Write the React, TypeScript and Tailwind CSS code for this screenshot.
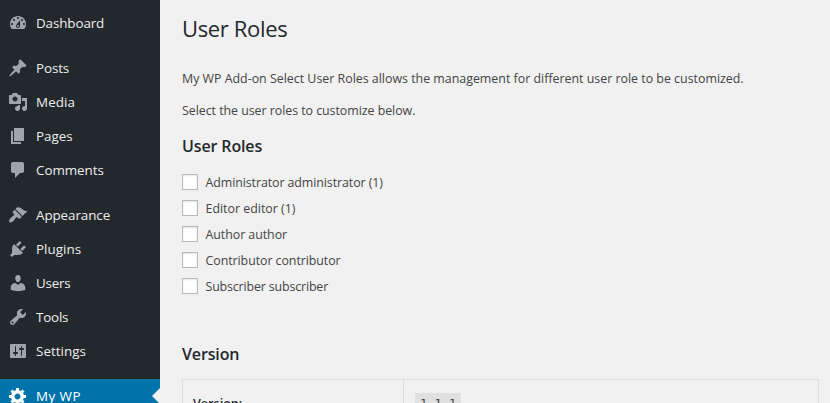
type MenuItem = { label: string; path: string; tracking: string; gap?: boolean; current?: boolean };

const menu: MenuItem[] = [
  {
    label: 'Dashboard',
    tracking: 'tracking-[-0.1px]',
    path: 'M3.76 16h12.48c1.1-1.37 1.76-3.11 1.76-5 0-4.42-3.58-8-8-8s-8 3.58-8 8c0 1.89.66 3.63 1.76 5zM10 4c.55 0 1 .45 1 1s-.45 1-1 1-1-.45-1-1 .45-1 1-1zM6 6c.55 0 1 .45 1 1s-.45 1-1 1-1-.45-1-1 .45-1 1-1zm8 0c.55 0 1 .45 1 1s-.45 1-1 1-1-.45-1-1 .45-1 1-1zm-5.37 5.55L12 7v6c0 1.1-.9 2-2 2s-2-.9-2-2c0-.57.24-1.08.63-1.45zM4 10c.55 0 1 .45 1 1s-.45 1-1 1-1-.45-1-1 .45-1 1-1zm12 0c.55 0 1 .45 1 1s-.45 1-1 1-1-.45-1-1 .45-1 1-1zm-5 3c0-.55-.45-1-1-1s-1 .45-1 1 .45 1 1 1 1-.45 1-1z',
  },
  {
    label: 'Posts',
    tracking: 'tracking-[-0.1px]',
    gap: true,
    path: 'M10.44 3.02l1.82-1.82 6.36 6.35-1.83 1.82c-1.05-.68-2.48-.57-3.41.36l-.75.75c-.92.93-1.04 2.35-.35 3.41l-1.83 1.82-2.41-2.41-2.8 2.79c-.42.42-3.38 2.71-3.8 2.29s1.86-3.39 2.28-3.81l2.79-2.79L4.1 9.36l1.83-1.82c1.05.69 2.48.57 3.4-.36l.75-.75c.93-.92 1.05-2.35.36-3.41z',
  },
  {
    label: 'Media',
    tracking: 'tracking-[0.1px]',
    path: 'M13 11V4c0-.55-.45-1-1-1h-1.67L9 1H5L3.67 3H2c-.55 0-1 .45-1 1v7c0 .55.45 1 1 1h10c.55 0 1-.45 1-1zM7 4.5c1.38 0 2.5 1.12 2.5 2.5S8.38 9.5 7 9.5 4.5 8.38 4.5 7 5.62 4.5 7 4.5zM14 6h5v10.5c0 1.38-1.12 2.5-2.5 2.5S14 17.88 14 16.5s1.12-2.5 2.5-2.5c.17 0 .34.02.5.05V9h-3V6zm-4 8.05V13h2v3.5c0 1.38-1.12 2.5-2.5 2.5S7 17.88 7 16.5 8.12 14 9.5 14c.17 0 .34.02.5.05z',
  },
  { label: 'Pages', tracking: 'tracking-normal', path: 'M6 15V2h10v13H6zm-1 1h8v2H3V5h2v11z' },
  {
    label: 'Comments',
    tracking: 'tracking-[-0.05px]',
    path: 'M5 2h9c1.1 0 2 .9 2 2v7c0 1.1-.9 2-2 2h-2l-5 5v-5H5c-1.1 0-2-.9-2-2V4c0-1.1.9-2 2-2z',
  },
  {
    label: 'Appearance',
    tracking: 'tracking-[-0.08px]',
    gap: true,
    path: 'M14.48 11.06L7.41 3.99l1.5-1.5c.5-.56 2.3-.47 3.51.32 1.21.8 1.43 1.28 2.91 2.1 1.18.64 2.45 1.26 4.45.85zm-.71.71L6.7 4.7 4.93 6.47c-.39.39-.39 1.02 0 1.41l1.06 1.06c.39.39.39 1.03 0 1.42-.6.6-1.43 1.11-2.21 1.69-.35.26-.7.53-1.01.84C1.43 14.23.4 16.08 1.4 17.07c.99 1 2.84-.03 4.18-1.36.31-.31.58-.66.85-1.02.57-.78 1.08-1.61 1.69-2.21.39-.39 1.02-.39 1.41 0l1.06 1.06c.39.39 1.02.39 1.41 0z',
  },
  {
    label: 'Plugins',
    tracking: 'tracking-[0.05px]',
    path: 'M13.11 4.36L9.87 7.6 8 5.73l3.24-3.24c.35-.34 1.05-.2 1.56.32.52.51.66 1.21.31 1.55zm-8 1.77l.91-1.12 9.01 9.01-1.19.84c-.71.71-2.63 1.16-3.82 1.16H6.14L4.9 17.26c-.59.59-1.54.59-2.12 0-.59-.58-.59-1.53 0-2.12l1.24-1.24v-3.88c0-1.13.4-3.19 1.09-3.89zm7.26 3.97l3.24-3.24c.34-.35 1.04-.21 1.55.31.52.51.66 1.21.31 1.55l-3.24 3.25z',
  },
  {
    label: 'Users',
    tracking: 'tracking-[-0.2px]',
    path: 'M10 9.25c-2.27 0-2.73-3.44-2.73-3.44C7 4.02 7.82 2 9.97 2c2.16 0 2.98 2.02 2.71 3.81 0 0-.41 3.44-2.68 3.44zm0 2.57L12.72 10c2.39 0 4.52 2.33 4.52 4.53v2.49s-3.65 1.13-7.24 1.13c-3.65 0-7.24-1.13-7.24-1.13v-2.49c0-2.25 1.94-4.48 4.47-4.48z',
  },
  {
    label: 'Tools',
    tracking: 'tracking-[-0.2px]',
    path: 'M16.68 9.77c-1.34 1.34-3.3 1.67-4.95.99l-5.41 6.52c-.99.99-2.59.99-3.58 0s-.99-2.59 0-3.57l6.52-5.42c-.68-1.65-.35-3.61.99-4.95 1.28-1.28 3.12-1.62 4.72-1.06l-2.89 2.89 2.82 2.82 2.86-2.87c.53 1.58.18 3.39-1.08 4.65zM3.81 16.21c.4.39 1.04.39 1.43 0 .4-.4.4-1.04 0-1.43-.39-.4-1.03-.4-1.43 0-.39.39-.39 1.03 0 1.43z',
  },
  {
    label: 'Settings',
    tracking: 'tracking-[0.05px]',
    path: 'M18 16V4c0-.55-.45-1-1-1H3c-.55 0-1 .45-1 1v12c0 .55.45 1 1 1h14c.55 0 1-.45 1-1zM8 11h1c.55 0 1 .45 1 1s-.45 1-1 1H8v1.5c0 .28-.22.5-.5.5s-.5-.22-.5-.5V13H6c-.55 0-1-.45-1-1s.45-1 1-1h1V5.5c0-.28.22-.5.5-.5s.5.22.5.5V11zm5-2h-1c-.55 0-1-.45-1-1s.45-1 1-1h1V5.5c0-.28.22-.5.5-.5s.5.22.5.5V7h1c.55 0 1 .45 1 1s-.45 1-1 1h-1v5.5c0 .28-.22.5-.5.5s-.5-.22-.5-.5V9z',
  },
  {
    label: 'My WP',
    tracking: 'tracking-[0.45px]',
    gap: true,
    current: true,
    path: 'M18 12h-2.18c-.17.7-.44 1.35-.81 1.93l1.54 1.54-2.1 2.1-1.54-1.54c-.58.36-1.23.63-1.91.79V19H8v-2.18c-.68-.16-1.33-.43-1.91-.79l-1.54 1.54-2.12-2.12 1.54-1.54c-.36-.58-.63-1.23-.79-1.91H1V9.03h2.17c.16-.7.44-1.35.8-1.94L2.43 5.55l2.1-2.1 1.54 1.54c.58-.37 1.24-.64 1.93-.81V2h3v2.18c.68.16 1.33.43 1.91.79l1.54-1.54 2.12 2.12-1.54 1.54c.36.59.64 1.24.8 1.94H18V12zm-8.5 1.5c1.66 0 3-1.34 3-3s-1.34-3-3-3-3 1.34-3 3 1.34 3 3 3z',
  },
];

const roles = [
  { label: 'Administrator administrator (1)', tracking: 'tracking-[-0.08px]' },
  { label: 'Editor editor (1)', tracking: 'tracking-normal' },
  { label: 'Author author', tracking: 'tracking-[-0.05px]' },
  { label: 'Contributor contributor', tracking: 'tracking-[-0.06px]' },
  { label: 'Subscriber subscriber', tracking: 'tracking-[-0.14px]' },
];

function Sidebar() {
  return (
    <nav className="h-full w-40 shrink-0 overflow-hidden bg-[#23282d] pt-[6px]">
      {menu.map((item) => (
        <a
          key={item.label}
          className={`relative flex h-[34px] items-center pl-2 text-[13.4px] leading-[18px] ${item.gap ? 'mt-[11px]' : ''} ${item.current ? 'bg-[#0073aa] text-white' : 'text-[#eeeeee]'}`}
        >
          <svg viewBox="0 0 20 20" className={`mr-2 size-5 shrink-0 ${item.current ? 'fill-white' : 'fill-[#a0a5aa]'}`}>
            <path d={item.path} />
          </svg>
          <span className={`whitespace-nowrap ${item.tracking}`}>{item.label}</span>
          {item.current && (
            <span className="absolute top-[9px] right-0 size-0 border-8 border-transparent border-r-[#f1f1f1]" />
          )}
        </a>
      ))}
    </nav>
  );
}

export default function App() {
  return (
    <div className="flex h-[403px] w-[830px] overflow-hidden bg-[#f1f1f1] font-['Open_Sans','Noto_Sans',sans-serif] text-[#444444]">
      <Sidebar />
      <main className="w-[670px] pr-[11px] pl-[22px] text-[12.4px] whitespace-nowrap">
        <h1 className="pt-[13px] text-[22px] leading-[30px] tracking-[-0.35px] text-[#23282d]">User Roles</h1>
        <p className="mt-[26px] leading-[20px]">
          My WP Add-on Select User Roles allows the management for different user role to be customized.
        </p>
        <p className="mt-[12px] leading-[20px] tracking-[-0.04px]">Select the user roles to customize below.</p>
        <h2 className="mt-[13px] text-[16px] leading-[24px] font-semibold tracking-[-0.13px] text-[#23282d]">User Roles</h2>
        <ul className="mt-[11px]">
          {roles.map((role) => (
            <li key={role.label} className="flex h-[26px] items-center">
              <span className="mr-[7.5px] size-4 border border-[#b4b9be] bg-white shadow-[inset_0_1px_2px_rgba(0,0,0,0.1)]" />
              <span className={`pt-[2px] ${role.tracking}`}>{role.label}</span>
            </li>
          ))}
        </ul>
        <h2 className="mt-[43px] text-[16px] leading-[24px] font-semibold tracking-[-0.13px] text-[#23282d]">Version</h2>
        <div className="mt-[13px] flex h-[60px] border border-[#dddddd]">
          <div className="w-[221px] border-r border-[#dddddd] pt-[14px] pl-[10px] text-[12.6px] leading-[20px] font-semibold text-[#23282d]">
            Version:
          </div>
          <div className="pt-[13px] pl-[11px]">
            <code className="block h-[20px] w-[46px] bg-[#e0e0e0] px-[5px] font-['DejaVu_Sans_Mono',monospace] text-[12px] leading-[22px]">
              1.1.1
            </code>
          </div>
        </div>
      </main>
    </div>
  );
}
